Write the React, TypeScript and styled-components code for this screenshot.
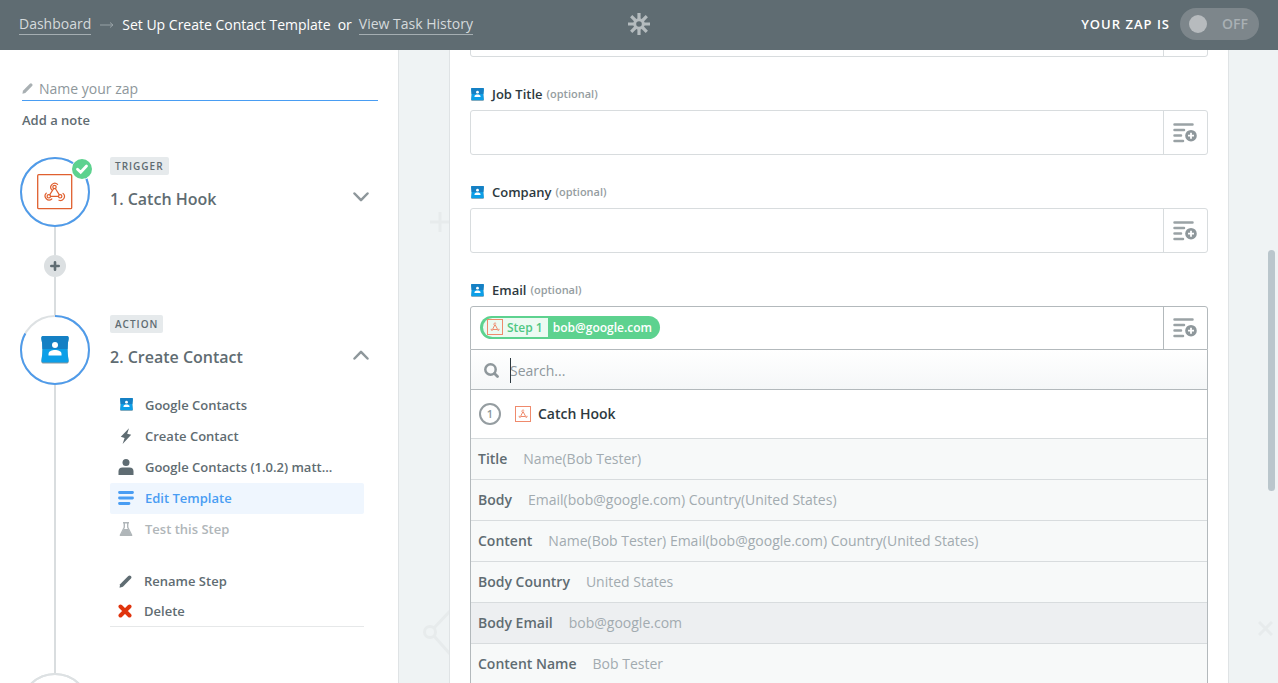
import React from "react";
import styled, { createGlobalStyle } from "styled-components";

const Global = createGlobalStyle`
  *, *::before, *::after { box-sizing: border-box; }
  body { margin: 0; background: #fff; }
  body, button, input { font-family: "Open Sans", "Noto Sans", sans-serif; }
  button { border: 0; padding: 0; background: none; cursor: pointer; text-align: left; }
  ul { list-style: none; margin: 0; padding: 0; }
  svg { display: block; flex: none; }
`;

const Shell = styled.div`
  display: flex;
  flex-direction: column;
  height: 100vh;
  overflow: hidden;
  color: #5f6c72;
`;

/* ---------- top bar ---------- */

const TopBar = styled.header`
  flex: none;
  display: grid;
  grid-template-columns: 1fr auto 1fr;
  align-items: center;
  height: 50px;
  padding: 0 19px 3px;
  background: #5f6c72;
  color: #fff;
`;

const Crumbs = styled.nav`
  display: flex;
  align-items: center;
  gap: 7px;
  padding-top: 2px;
  font-size: 14px;
  line-height: 20px;
  font-weight: 500;
  white-space: nowrap;
`;

const CrumbLink = styled.a`
  color: #d5dadc;
  font-weight: 400;
  text-decoration: none;
  border-bottom: 1px solid #a5aeb2;
`;

const Status = styled.div`
  display: flex;
  justify-content: flex-end;
  align-items: center;
  gap: 10px;
  font-size: 13px;
  font-weight: 600;
  letter-spacing: 1px;
`;

const Toggle = styled.button`
  display: flex;
  align-items: center;
  justify-content: space-between;
  width: 79px;
  height: 32px;
  padding: 0 11px 0 9px;
  border-radius: 16px;
  background: #7d868b;
  color: #a9b0b4;
  font-size: 14px;
  font-weight: 600;
`;

const Knob = styled.span`
  width: 18px;
  height: 18px;
  border-radius: 50%;
  background: #b7bbbe;
`;

/* ---------- sidebar ---------- */

const Body = styled.div`
  flex: 1;
  display: flex;
  min-height: 0;
`;

const Sidebar = styled.aside`
  flex: none;
  width: 399px;
  padding: 28px 20px 0;
  border-right: 1px solid #dfe3e5;
  overflow: hidden;
`;

const NameRow = styled.label`
  display: flex;
  align-items: center;
  gap: 6px;
  height: 23px;
  margin-left: 2px;
  padding-bottom: 1px;
  border-bottom: 1px solid #499df3;
`;

const PlainInput = styled.input`
  flex: 1;
  min-width: 0;
  padding: 0;
  border: 0;
  outline: 0;
  background: none;
  font-size: 14px;
  line-height: 20px;
  color: #5f6c72;
  &::placeholder { color: #8e979b; opacity: 1; }
`;

const NoteButton = styled.button`
  display: block;
  margin: 9px 0 27px 2px;
  font-size: 13px;
  line-height: 20px;
  font-weight: 600;
  color: #5f6c72;
`;

const Step = styled.section<{ $height: number }>`
  display: flex;
  gap: 20px;
  min-height: ${(p) => p.$height}px;
`;

const Track = styled.div`
  flex: none;
  display: flex;
  flex-direction: column;
  align-items: center;
  width: 70px;
`;

const StepCircle = styled.div`
  position: relative;
  flex: none;
  display: grid;
  place-items: center;
  width: 70px;
  height: 70px;
  & > * { grid-area: 1 / 1; }
`;

const DoneBadge = styled.span`
  position: absolute;
  top: 1px;
  right: -3px;
  border: 1px solid #fff;
  border-radius: 50%;
`;

const Line = styled.div<{ $length?: number }>`
  width: 2px;
  flex: ${(p) => (p.$length ? `0 0 ${p.$length}px` : "1")};
  background: #d9dddf;
`;

const AddButton = styled.button`
  flex: none;
  display: grid;
  place-items: center;
  width: 22px;
  height: 22px;
  border-radius: 50%;
  background: #dce0e2;
`;

const StepBody = styled.div`
  flex: 1;
  min-width: 0;
  padding-right: 8px;
`;

const Tag = styled.span`
  display: block;
  width: fit-content;
  padding: 0 5px;
  border-radius: 2px;
  background: #e6eaec;
  font-size: 10px;
  line-height: 18px;
  font-weight: 600;
  letter-spacing: 1px;
`;

const StepTitle = styled.button`
  display: flex;
  align-items: flex-start;
  justify-content: space-between;
  width: 100%;
  margin-top: 12px;
  color: #5f6c72;
  font-size: 16px;
  line-height: 24px;
  font-weight: 600;
  & > svg { margin: 5px 1px 0 0; }
`;

const StepMenu = styled.ul`
  margin: 21px 6px 0 0;
`;

const StepActions = styled(StepMenu)`
  border-bottom: 1px solid #e6e8e9;
`;

const MenuItem = styled.button<{ $tone?: "active" | "muted"; $compact?: boolean }>`
  display: flex;
  align-items: center;
  gap: 11px;
  width: 100%;
  height: ${(p) => (p.$compact ? 30 : 31)}px;
  padding: ${(p) => (p.$compact ? "0 0 0 7px" : "0 0 2px 8px")};
  border-radius: 2px;
  font-size: 13px;
  font-weight: 600;
  white-space: nowrap;
  color: ${(p) => (p.$tone === "active" ? "#499df3" : p.$tone === "muted" ? "#b0b6b9" : "#5f6c72")};
  background: ${(p) => (p.$tone === "active" ? "#eff6fe" : "transparent")};
`;

const IconSlot = styled.span`
  flex: none;
  display: grid;
  place-items: center;
  width: 16px;
`;

/* ---------- template form ---------- */

const Main = styled.main`
  position: relative;
  flex: 1;
  min-width: 0;
  padding: 0 49px 0 50px;
  background: #eff3f4;
  overflow: hidden;
`;

const Ornament = styled.svg<{ $side: "left" | "right"; $inset: number; $top: number }>`
  position: absolute;
  ${(p) => p.$side}: ${(p) => p.$inset}px;
  top: ${(p) => p.$top}px;
  fill: none;
  stroke: #e7ebec;
`;

const ScrollThumb = styled.div`
  position: absolute;
  top: 200px;
  right: 3px;
  width: 7px;
  height: 241px;
  border-radius: 4px;
  background: #bac6cc;
`;

const Card = styled.form`
  position: relative;
  margin-top: -38px;
  padding: 0 20px;
  min-height: calc(100% + 38px);
  background: #fff;
  border: 1px solid #dfe3e5;
  border-top: 0;
`;

const FieldLabel = styled.label`
  display: flex;
  align-items: center;
  gap: 8px;
  margin: 27px 0 6px 1px;
  font-size: 13px;
  line-height: 20px;
  font-weight: 600;
  color: #2d3940;
`;

const Optional = styled.span`
  margin-left: -4px;
  font-size: 11px;
  color: #959da1;
`;

const FieldBox = styled.div<{ $open?: boolean }>`
  display: flex;
  height: ${(p) => (p.$open ? 44 : 45)}px;
  border: 1px solid ${(p) => (p.$open ? "#b3b9bc" : "#d8dcde")};
  border-radius: ${(p) => (p.$open ? "3px 3px 0 0" : "3px")};
`;

const FieldInput = styled(PlainInput)`
  padding: 0 9px;
`;

const TokenArea = styled.div`
  flex: 1;
  min-width: 0;
  display: flex;
  align-items: center;
  padding: 0 0 2px 9px;
`;

const InsertButton = styled.button<{ $open?: boolean }>`
  display: grid;
  place-items: center;
  width: 44px;
  padding-right: 2px;
  border-left: 1px solid ${(p) => (p.$open ? "#b3b9bc" : "#d8dcde")};
`;

const Token = styled.span`
  display: flex;
  align-items: center;
  height: 23px;
  padding: 2px 8px 2px 3px;
  border-radius: 12px;
  background: #5dd28f;
  color: #fff;
  font-size: 12px;
  font-weight: 600;
  white-space: nowrap;
`;

const TokenStep = styled.span`
  display: flex;
  align-items: center;
  gap: 4px;
  height: 19px;
  margin-right: 5px;
  padding: 0 5px 0 4px;
  border-radius: 10px 0 0 10px;
  background: #ecfaf2;
  color: #4fc783;
`;

const Dropdown = styled.div`
  border: 1px solid #b3b9bc;
  border-width: 0 1px;
`;

const SearchRow = styled.label`
  display: flex;
  align-items: center;
  gap: 11px;
  height: 40px;
  padding: 2px 0 0 13px;
  border-bottom: 1px solid #b3b9bc;
  background: linear-gradient(#fff, #f5f7f8);
`;

const SearchSlot = styled.span`
  position: relative;
  flex: 1;
  display: flex;
  &::before {
    content: "";
    position: absolute;
    top: -3px;
    width: 1px;
    height: 25px;
    background: #2d3940;
  }
`;

const SourceRow = styled.div`
  display: flex;
  align-items: center;
  height: 48px;
  padding: 0 0 1px 8px;
  background: #fff;
`;

const StepNumber = styled.span`
  display: grid;
  place-items: center;
  width: 22px;
  height: 22px;
  margin-right: 14px;
  border: 2px solid #959da1;
  border-radius: 50%;
  font-size: 11px;
  line-height: 16px;
  font-weight: 600;
  color: #8e979b;
`;

const SourceName = styled.span`
  margin-left: 7px;
  font-size: 14px;
  font-weight: 600;
  color: #2d3940;
`;

const ValueRow = styled.button<{ $hover?: boolean }>`
  display: flex;
  align-items: center;
  gap: 16px;
  width: 100%;
  height: 41px;
  padding: 0 0 2px 7px;
  border-top: 1px solid #d8dcde;
  background: ${(p) => (p.$hover ? "#edeff1" : "#f7f9f9")};
  font-size: 14px;
  color: #a2abb0;
  white-space: nowrap;
`;

const ValueName = styled.span`
  font-weight: 600;
  color: #5f6c72;
`;

/* ---------- drawings ---------- */

const WebhookIcon = () => (
  <svg width="36" height="36" viewBox="0 0 36 36" fill="none" stroke="#e0602f" strokeWidth="1.300" strokeLinecap="round">
    <rect x=".7" y=".7" width="34" height="34" rx="1" />
    <g strokeWidth="1.200">
      <circle cx="17.500" cy="13" r="1.700" />
      <circle cx="11.800" cy="22.300" r="1.700" />
      <circle cx="23.200" cy="22.300" r="1.700" />
      <path d="M16.600 14.700L12.800 20.600M18.500 14.700L22.200 20.600M13.700 22.300H21.300" />
      <path d="M14.800 15.900A4 4 0 0 1 20.600 10.400M9.300 19.200A4 4 0 0 0 14.800 25M22 26.200A4 4 0 0 0 26 19.400" />
    </g>
  </svg>
);

const SmallWebhookIcon = () => (
  <svg width="16" height="16" viewBox="0 0 16 16" fill="none" stroke="#ef8a6c">
    <rect x=".5" y=".5" width="15" height="15" />
    <path d="M8 5.500L5.500 10.500H10.700Z" strokeLinejoin="round" />
    <path d="M6.600 5.500A1.500 1.500 0 0 1 9.200 4.600M4.200 9.800A1.300 1.300 0 0 0 5.500 11.500M10.700 11.500A1.300 1.300 0 0 0 12 9.800" />
  </svg>
);

const ContactsIcon = ({ size }: { size: number }) => (
  <svg width={size} height={size} viewBox="0 0 28 28">
    <path d="M2 1H26Q28 1 27.500 3Q25.500 14 27.500 24.500Q28 27.500 26 27.500H2Q0 27.500 .5 24.500Q2.500 14 .5 3Q0 1 2 1Z" fill="#8b979c" />
    <path d="M2 0H26Q28 0 27.500 3Q25.500 13 27.500 23.500Q28 26.500 26 26.500H2Q0 26.500 .5 23.500Q2.500 13 .5 3Q0 0 2 0Z" fill="#0c9fe8" />
    <path d="M2 0H26Q28 0 27.500 3Q26.500 8 26.500 13H1.500Q1.500 8 .5 3Q0 0 2 0Z" fill="#1580c4" />
    <circle cx="14" cy="9" r="3" fill="#fff" />
    <path d="M7.500 19.500V18C7.500 15 11 14 14 14S20.500 15 20.500 18V19.500Z" fill="#fff" />
  </svg>
);

const PencilIcon = ({ size, color }: { size: number; color: string }) => (
  <svg width={size} height={size} viewBox="0 0 14 14" fill={color}>
    <path d="M0.600 13.600L1.200 9.900L10 1.100Q11.400 -.2 12.800 1.200Q14 2.600 12.900 3.900L4.200 12.600Z" />
  </svg>
);

const Chevron = ({ up }: { up?: boolean }) => (
  <svg width="16" height="10" viewBox="0 0 16 10" fill="none" stroke="#8e979b" strokeWidth="2.500" strokeLinecap="round" strokeLinejoin="round">
    <path d={up ? "M1.500 8.500L8 1.800L14.500 8.500" : "M1.500 1.500L8 8.200L14.500 1.500"} />
  </svg>
);

const InsertIcon = () => (
  <svg width="24" height="20" viewBox="0 0 24 20">
    <path d="M1.500 1.500H19.500M1.500 7H11M1.500 12.500H8M1.500 18H10" stroke="#9aa2a5" strokeWidth="2.500" strokeLinecap="round" />
    <circle cx="18" cy="12.700" r="5.800" fill="#8e979b" />
    <path d="M18 9.700V15.700M15 12.700H21" stroke="#fff" strokeWidth="1.800" />
  </svg>
);

const CircleRing = ({ progress = 1, color = "#4f9bea" }: { progress?: number; color?: string }) => {
  const length = 2 * Math.PI * 34;
  return (
    <svg width="70" height="70" viewBox="0 0 70 70" fill="none" strokeWidth="2">
      <circle cx="35" cy="35" r="34" stroke="#dde1e3" />
      <circle cx="35" cy="35" r="34" stroke={color} strokeDasharray={`${length * progress} ${length}`} transform="rotate(-90 35 35)" />
    </svg>
  );
};

const LogoMark = () => (
  <svg width="22" height="22" viewBox="0 0 22 22" fill="none" stroke="#b4bbbe" strokeWidth="3.200">
    <circle cx="11" cy="11" r="4.300" strokeWidth="3" />
    <path d="M11 0V7M11 15V22M0 11H7M15 11H22M3.200 3.200L8 8M14 14L18.800 18.800M3.200 18.800L8 14M14 8L18.800 3.200" />
  </svg>
);

const BoltIcon = () => (
  <svg width="12" height="16" viewBox="0 0 12 16" fill="#5f6c72">
    <path d="M9 .3L.8 8.800L4.600 9.900L2.600 16L11.200 6.800L7.200 5.700Z" />
  </svg>
);

const PersonIcon = () => (
  <svg width="16" height="16" viewBox="0 0 16 16" fill="#5f6c72">
    <circle cx="8" cy="3.500" r="3.500" />
    <path d="M.5 16V12.500Q.5 8.500 4.500 8.500H11.500Q15.500 8.500 15.500 12.500V16Z" />
  </svg>
);

const LinesIcon = () => (
  <svg width="16" height="14" viewBox="0 0 16 14" stroke="#499df3" strokeWidth="2.800" strokeLinecap="round">
    <path d="M1.500 1.500H14.500M1.500 7H14.500M1.500 12.500H11" />
  </svg>
);

const FlaskIcon = () => (
  <svg width="14" height="14" viewBox="0 0 14 14">
    <path d="M4 .7H10M5.300 1V5.300L1.300 13.200H12.700L8.700 5.300V1" fill="none" stroke="#b0b6b9" strokeWidth="1.400" strokeLinejoin="round" />
    <path d="M4.800 7H9.200L12.500 13.300H1.500Z" fill="#b0b6b9" />
  </svg>
);

const CrossIcon = () => (
  <svg width="14" height="14" viewBox="0 0 14 14" stroke="#e0340d" strokeWidth="4" strokeLinecap="round">
    <path d="M2.500 2.500L11.500 11.500M11.500 2.500L2.500 11.500" />
  </svg>
);

const SearchIcon = () => (
  <svg width="15" height="15" viewBox="0 0 15 15" fill="none" stroke="#8e979b" strokeLinecap="round">
    <circle cx="6.500" cy="6.500" r="5.200" strokeWidth="2.500" />
    <path d="M10.500 10.500L13.500 13.500" strokeWidth="2.800" />
  </svg>
);

/* ---------- content ---------- */

const menu = [
  { label: "Google Contacts", icon: <ContactsIcon size={13} /> },
  { label: "Create Contact", icon: <BoltIcon /> },
  { label: "Google Contacts (1.0.2) matt...", icon: <PersonIcon /> },
  { label: "Edit Template", icon: <LinesIcon />, tone: "active" as const },
  { label: "Test this Step", icon: <FlaskIcon />, tone: "muted" as const },
];

const values = [
  ["Title", "Name(Bob Tester)"],
  ["Body", "Email(bob@google.com) Country(United States)"],
  ["Content", "Name(Bob Tester) Email(bob@google.com) Country(United States)"],
  ["Body Country", "United States"],
  ["Body Email", "bob@google.com"],
  ["Content Name", "Bob Tester"],
];

const Label = ({ id, children }: { id: string; children: string }) => (
  <FieldLabel htmlFor={id}>
    <ContactsIcon size={13} />
    {children}
    <Optional>(optional)</Optional>
  </FieldLabel>
);

const TextField = ({ id, label }: { id: string; label?: string }) => (
  <>
    {label && <Label id={id}>{label}</Label>}
    <FieldBox>
      <FieldInput id={id} aria-label={label ? undefined : id} />
      <InsertButton type="button" aria-label="Insert a field">
        <InsertIcon />
      </InsertButton>
    </FieldBox>
  </>
);

export default function App() {
  return (
    <Shell>
      <Global />
      <TopBar>
        <Crumbs>
          <CrumbLink href="#dashboard">Dashboard</CrumbLink>
          <svg width="17" height="8" viewBox="0 0 17 8" fill="none" stroke="#98a2a6">
            <path d="M2 4H15M12 1.500L15 4L12 6.500" />
          </svg>
          <span>Set Up Create Contact Template</span>
          <span>or</span>
          <CrumbLink href="#history">View Task History</CrumbLink>
        </Crumbs>
        <LogoMark />
        <Status>
          YOUR ZAP IS
          <Toggle role="switch" aria-checked={false}>
            <Knob />
            OFF
          </Toggle>
        </Status>
      </TopBar>

      <Body>
        <Sidebar>
          <NameRow>
            <PencilIcon size={11} color="#a9b0b3" />
            <PlainInput placeholder="Name your zap" aria-label="Name your zap" />
          </NameRow>
          <NoteButton>Add a note</NoteButton>

          <Step $height={158}>
            <Track>
              <StepCircle>
                <CircleRing />
                <WebhookIcon />
                <DoneBadge>
                  <svg width="20" height="20" viewBox="0 0 20 20" fill="none">
                    <circle cx="10" cy="10" r="10" fill="#5dd28f" />
                    <path d="M5.500 10.300L8.700 13.300L14.500 7" stroke="#fff" strokeWidth="2.800" strokeLinecap="round" />
                  </svg>
                </DoneBadge>
              </StepCircle>
              <Line $length={28} />
              <AddButton aria-label="Add a step">
                <svg width="10" height="10" viewBox="0 0 10 10" stroke="#5f6c72" strokeWidth="2.600" strokeLinecap="round">
                  <path d="M5 1.300V8.700M1.300 5H8.700" />
                </svg>
              </AddButton>
              <Line />
            </Track>
            <StepBody>
              <Tag>TRIGGER</Tag>
              <StepTitle>
                1. Catch Hook
                <Chevron />
              </StepTitle>
            </StepBody>
          </Step>

          <Step $height={358}>
            <Track>
              <StepCircle>
                <CircleRing progress={0.83} />
                <ContactsIcon size={28} />
              </StepCircle>
              <Line />
            </Track>
            <StepBody>
              <Tag>ACTION</Tag>
              <StepTitle>
                2. Create Contact
                <Chevron up />
              </StepTitle>
              <StepMenu>
                {menu.map((m) => (
                  <li key={m.label}>
                    <MenuItem $tone={m.tone}>
                      <IconSlot>{m.icon}</IconSlot>
                      {m.label}
                    </MenuItem>
                  </li>
                ))}
              </StepMenu>
              <StepActions>
                <li>
                  <MenuItem $compact>
                    <IconSlot><PencilIcon size={13} color="#5f6c72" /></IconSlot>
                    Rename Step
                  </MenuItem>
                </li>
                <li>
                  <MenuItem $compact>
                    <IconSlot><CrossIcon /></IconSlot>
                    Delete
                  </MenuItem>
                </li>
              </StepActions>
            </StepBody>
          </Step>

          <Step $height={70}>
            <Track>
              <StepCircle>
                <CircleRing color="#dde1e3" />
              </StepCircle>
            </Track>
          </Step>
        </Sidebar>

        <Main>
          <Ornament $side="left" $inset={31} $top={161} width="20" height="22" viewBox="0 0 20 22" strokeWidth="3">
            <path d="M10 1V21M0 11H20" />
          </Ornament>
          <Ornament $side="left" $inset={23} $top={560} width="28" height="46" viewBox="0 0 28 46" strokeWidth="3">
            <circle cx="8" cy="22" r="5.500" />
            <path d="M12 18L28 1M12 26L28 44" />
          </Ornament>
          <Ornament $side="right" $inset={5} $top={571} width="15" height="15" viewBox="0 0 15 15" strokeWidth="3">
            <path d="M1 1L14 14M14 1L1 14" />
          </Ornament>

          <Card>
            <TextField id="notes" />
            <TextField id="job-title" label="Job Title" />
            <TextField id="company" label="Company" />

            <Label id="email">Email</Label>
            <FieldBox $open>
              <TokenArea>
                <Token>
                  <TokenStep>
                    <SmallWebhookIcon />
                    Step 1
                  </TokenStep>
                  bob@google.com
                </Token>
                <FieldInput id="email" />
              </TokenArea>
              <InsertButton $open type="button" aria-label="Insert a field">
                <InsertIcon />
              </InsertButton>
            </FieldBox>
            <Dropdown>
              <SearchRow>
                <SearchIcon />
                <SearchSlot>
                  <PlainInput placeholder="Search..." aria-label="Search" />
                </SearchSlot>
              </SearchRow>
              <SourceRow>
                <StepNumber>1</StepNumber>
                <SmallWebhookIcon />
                <SourceName>Catch Hook</SourceName>
              </SourceRow>
              <ul>
                {values.map(([name, value]) => (
                  <li key={name}>
                    <ValueRow type="button" $hover={name === "Body Email"}>
                      <ValueName>{name}</ValueName>
                      {value}
                    </ValueRow>
                  </li>
                ))}
              </ul>
            </Dropdown>
          </Card>
          <ScrollThumb />
        </Main>
      </Body>
    </Shell>
  );
}
